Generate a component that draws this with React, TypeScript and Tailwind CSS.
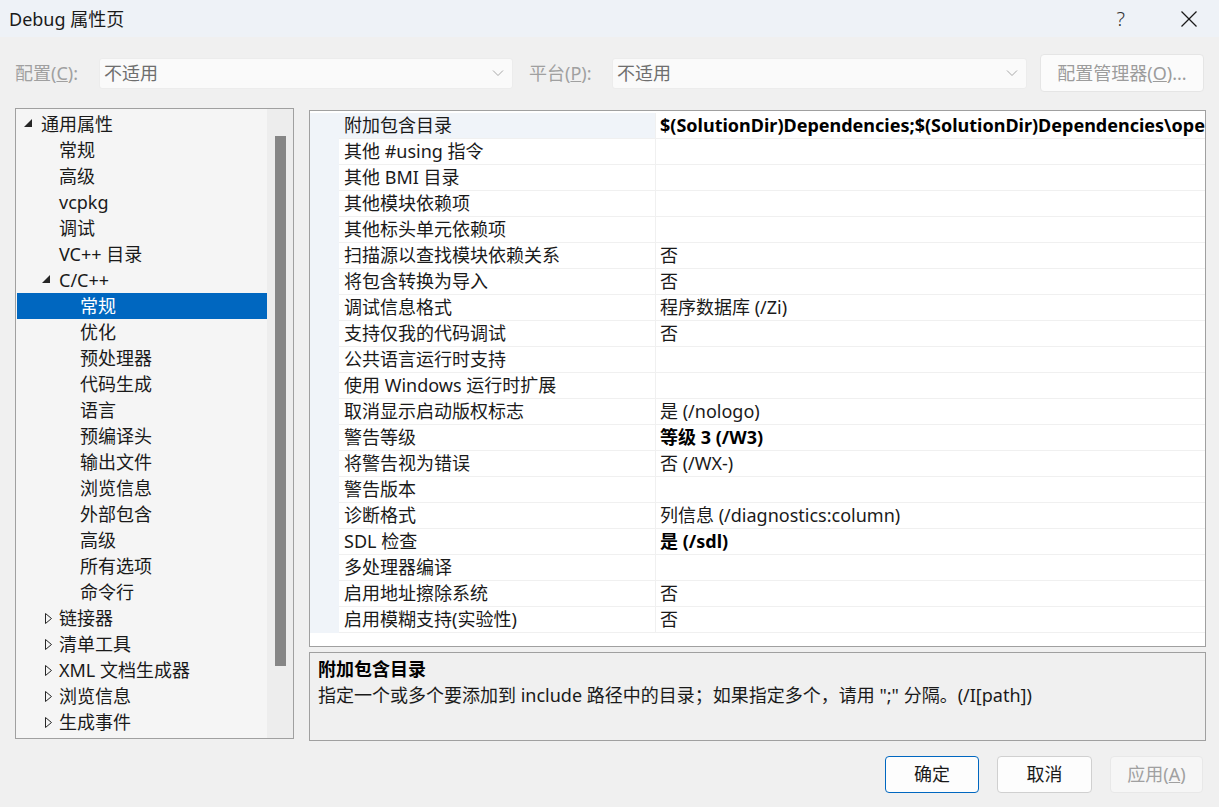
import React from "react";

const FONT = { fontFamily: '"Noto Sans", "Noto Sans CJK SC", sans-serif' };

type TreeItem = { t: string; lvl: number; exp?: boolean; col?: boolean; sel?: boolean };

const tree: TreeItem[] = [
  { t: "通用属性", lvl: 0, exp: true },
  { t: "常规", lvl: 1 },
  { t: "高级", lvl: 1 },
  { t: "vcpkg", lvl: 1 },
  { t: "调试", lvl: 1 },
  { t: "VC++ 目录", lvl: 1 },
  { t: "C/C++", lvl: 1, exp: true },
  { t: "常规", lvl: 2, sel: true },
  { t: "优化", lvl: 2 },
  { t: "预处理器", lvl: 2 },
  { t: "代码生成", lvl: 2 },
  { t: "语言", lvl: 2 },
  { t: "预编译头", lvl: 2 },
  { t: "输出文件", lvl: 2 },
  { t: "浏览信息", lvl: 2 },
  { t: "外部包含", lvl: 2 },
  { t: "高级", lvl: 2 },
  { t: "所有选项", lvl: 2 },
  { t: "命令行", lvl: 2 },
  { t: "链接器", lvl: 1, col: true },
  { t: "清单工具", lvl: 1, col: true },
  { t: "XML 文档生成器", lvl: 1, col: true },
  { t: "浏览信息", lvl: 1, col: true },
  { t: "生成事件", lvl: 1, col: true },
];

type Prop = { k: string; v?: string; b?: boolean };
const props: Prop[] = [
  { k: "附加包含目录", v: "$(SolutionDir)Dependencies;$(SolutionDir)Dependencies\\opencv\\include;%(AdditionalIncludeDirectories)", b: true },
  { k: "其他 #using 指令" },
  { k: "其他 BMI 目录" },
  { k: "其他模块依赖项" },
  { k: "其他标头单元依赖项" },
  { k: "扫描源以查找模块依赖关系", v: "否" },
  { k: "将包含转换为导入", v: "否" },
  { k: "调试信息格式", v: "程序数据库 (/Zi)" },
  { k: "支持仅我的代码调试", v: "否" },
  { k: "公共语言运行时支持" },
  { k: "使用 Windows 运行时扩展" },
  { k: "取消显示启动版权标志", v: "是 (/nologo)" },
  { k: "警告等级", v: "等级 3 (/W3)", b: true },
  { k: "将警告视为错误", v: "否 (/WX-)" },
  { k: "警告版本" },
  { k: "诊断格式", v: "列信息 (/diagnostics:column)" },
  { k: "SDL 检查", v: "是 (/sdl)", b: true },
  { k: "多处理器编译" },
  { k: "启用地址擦除系统", v: "否" },
  { k: "启用模糊支持(实验性)", v: "否" },
];

function Chevron() {
  return (
    <svg width="12" height="8" viewBox="0 0 12 8" className="shrink-0">
      <polyline points="1,1.5 6,6.5 11,1.5" fill="none" stroke="#a8a8a8" strokeWidth="1" />
    </svg>
  );
}

function ExpTri() {
  return (
    <svg width="8" height="8" viewBox="0 0 8 8">
      <polygon points="8,0 8,8 0,8" fill="#262626" />
    </svg>
  );
}

function ColTri() {
  return (
    <svg width="8" height="11" viewBox="0 0 8 11">
      <polygon points="0.5,0.5 6.5,5.5 0.5,10.5" fill="none" stroke="#262626" strokeWidth="1" />
    </svg>
  );
}

function TreeRow({ it }: { it: TreeItem }) {
  const pl = it.lvl === 0 ? "pl-[7px]" : it.lvl === 1 ? "pl-[25px]" : "pl-[45px]";
  const triMl = it.col ? "ml-[3px]" : "ml-0";
  return (
    <div
      className={`flex h-[26px] items-center ${pl} ${
        it.sel ? "bg-[#0067c0] text-white" : "text-[#1a1a1a]"
      }`}
    >
      <div className="w-[17px] flex items-center shrink-0">
        {it.exp && <span className="flex mt-[-2px]"><ExpTri /></span>}
        {it.col && <span className={`flex ${triMl}`}><ColTri /></span>}
      </div>
      {it.lvl === 2 && <div className="w-[18px] shrink-0" />}
      <span className={`leading-[26px] whitespace-nowrap ${it.lvl === 2 ? "ml-[-17px]" : ""}`}>{it.t}</span>
    </div>
  );
}

export default function App() {
  return (
    <div className="w-[1219px] h-[807px] bg-[#f0f0f0] flex flex-col text-[18px] overflow-hidden" style={FONT}>
      {/* title bar */}
      <div className="h-[37px] bg-[#eef2f7] flex items-center shrink-0">
        <span className="ml-[9px] text-[18px] text-[#1a1a1a] leading-none">Debug 属性页</span>
        <div className="flex-1" />
        <span className="text-[20px] text-[#333] mr-[56px] leading-none font-light" style={{ fontFamily: '"Noto Sans", sans-serif' }}>?</span>
        <svg width="16" height="16" viewBox="0 0 16 16" className="mr-[22px]">
          <line x1="0.5" y1="0.5" x2="15.5" y2="15.5" stroke="#1a1a1a" strokeWidth="1.2" />
          <line x1="15.5" y1="0.5" x2="0.5" y2="15.5" stroke="#1a1a1a" strokeWidth="1.2" />
        </svg>
      </div>

      {/* config row */}
      <div className="mt-[17px] h-[38px] flex items-center pl-[15px] shrink-0">
        <span className="w-[84px] text-[#a0a0a0] whitespace-nowrap">
          配置(<span className="underline">C</span>):
        </span>
        <div className="w-[414px] h-[31px] bg-[#fafafa] border border-[#ececec] rounded-[3px] flex items-center pl-[4px] pr-[8px]">
          <span className="flex-1 text-[#6e6e6e]">不适用</span>
          <Chevron />
        </div>
        <span className="ml-[16px] w-[83px] text-[#a0a0a0] whitespace-nowrap">
          平台(<span className="underline">P</span>):
        </span>
        <div className="w-[415px] h-[31px] bg-[#fafafa] border border-[#ececec] rounded-[3px] flex items-center pl-[4px] pr-[8px]">
          <span className="flex-1 text-[#6e6e6e]">不适用</span>
          <Chevron />
        </div>
        <div className="ml-[13px] w-[164px] h-[38px] bg-[#fbfbfb] border border-[#e5e5e5] rounded-[4px] flex items-center justify-center text-[#9c9c9c] whitespace-nowrap">
          配置管理器(<span className="underline">O</span>)...
        </div>
      </div>

      {/* main */}
      <div className="mt-[16px] flex pl-[15px] shrink-0">
        {/* tree */}
        <div className="w-[279px] h-[631px] border border-[#a0a0a0] bg-[#f5f5f5] flex">
          <div className="flex-1 pt-[2px] pl-[1px] overflow-hidden">
            {tree.map((it, i) => (
              <TreeRow key={i} it={it} />
            ))}
          </div>
          <div className="w-[26px] bg-[#ededed] flex justify-center pt-[27px]">
            <div className="w-[11px] h-[530px] bg-[#868686]" />
          </div>
        </div>

        {/* right column */}
        <div className="ml-[15px] mt-[2px] w-[897px] flex flex-col">
          <div className="h-[537px] border border-[#a0a0a0] bg-white pt-[2px] overflow-hidden">
            {props.map((p, i) => (
              <div key={i} className="flex h-[26px]">
                <div className="w-[29px] bg-[#f0f4f9] shrink-0" />
                <div
                  className={`w-[316px] shrink-0 pl-[5px] leading-[25px] whitespace-nowrap border-b border-[#f0f0f0] text-[#1a1a1a] ${
                    i === 0 ? "bg-[#f0f4f9]" : ""
                  }`}
                >
                  {p.k}
                </div>
                <div
                  className={`flex-1 pl-[4px] leading-[25px] whitespace-nowrap overflow-hidden border-b border-l border-[#f0f0f0] text-[#1a1a1a] ${
                    p.b ? "font-bold text-black" : ""
                  }`}
                >
                  {p.v ?? ""}
                </div>
              </div>
            ))}
          </div>
          <div className="mt-[5px] h-[89px] border border-[#a0a0a0] bg-[#f0f0f0] pl-[8px] pt-[3px] text-[#1a1a1a]">
            <div className="font-bold leading-[26px] text-black">附加包含目录</div>
            <div className="leading-[26px]">指定一个或多个要添加到 include 路径中的目录；如果指定多个，请用 ";" 分隔。(/I[path])</div>
          </div>
        </div>
      </div>

      {/* buttons */}
      <div className="mt-[15px] flex justify-end pr-[16px] gap-[18px] shrink-0">
        <div className="w-[94px] h-[37px] border border-[#0067c0] rounded-[4px] bg-[#fdfdfd] flex items-center justify-center text-[#1a1a1a]">
          确定
        </div>
        <div className="w-[95px] h-[37px] border border-[#d0d0d0] rounded-[4px] bg-[#fdfdfd] flex items-center justify-center text-[#1a1a1a]">
          取消
        </div>
        <div className="w-[93px] h-[37px] border border-[#e8e8e8] rounded-[4px] bg-[#f6f6f6] flex items-center justify-center text-[#a0a0a0]">
          应用(<span className="underline">A</span>)
        </div>
      </div>
    </div>
  );
}
